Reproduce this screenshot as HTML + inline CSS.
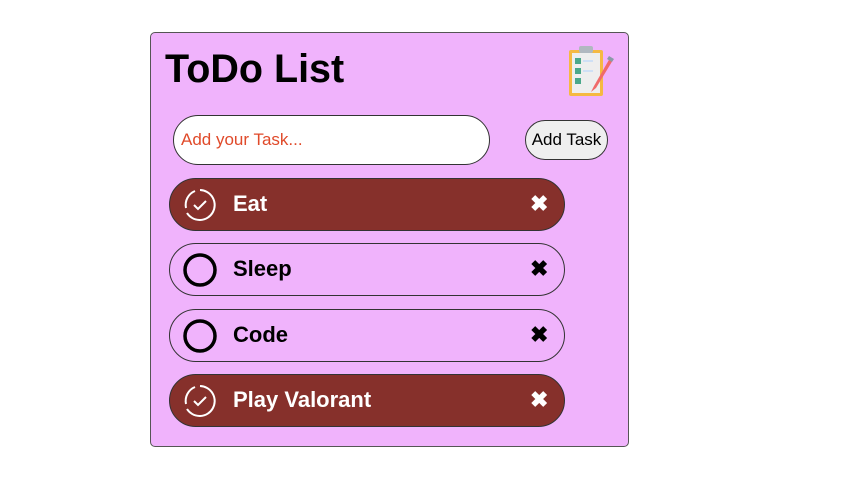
<!DOCTYPE html>
<html><head><style>
*{margin:0;padding:0;box-sizing:border-box}
body{width:843px;height:479px;background:#fff;position:relative;font-family:"Liberation Sans",Arial,sans-serif;overflow:hidden}
.card{position:absolute;left:150px;top:32px;width:479px;height:415px;background:#f0b3fc;border:1px solid #555;border-radius:5px}
h1{position:absolute;left:165px;top:47px;font-size:39.5px;font-weight:bold;color:#000}
.inp{position:absolute;left:173px;top:115px;width:317px;height:50px;background:#fff;border:1px solid #333;border-radius:25px;color:#e04a2a;font-size:17px;padding:14px 0 0 7px}
.btn{position:absolute;left:525px;top:120px;width:83px;height:40px;background:#efefef;border:1px solid #333;border-radius:20px;font-size:17px;text-align:center;line-height:37px;color:#000}
.item{position:absolute;left:169px;width:396px;height:53px;border:1px solid #333;border-radius:27px;font-size:22px;font-weight:bold}
.item.done{background:#86302b;color:#fff}
.item span{position:absolute;left:63px;top:12px}
.item .x{position:absolute;left:360px;top:12px;font-size:22px}
.item svg{position:absolute;left:13px;top:9px}
</style></head><body>
<div class="card"></div>
<h1>ToDo List</h1>
<svg style="position:absolute;left:566px;top:44px" width="50" height="54" viewBox="0 0 50 54">
<rect x="3" y="6" width="34" height="46" rx="2" fill="#f5b942"/>
<rect x="6" y="9" width="28" height="40" fill="#eeeeee"/>
<rect x="13" y="2" width="14" height="7" rx="2" fill="#b0b8c0"/>
<rect x="9" y="14" width="6" height="6" fill="#4aa88a"/><rect x="9" y="24" width="6" height="6" fill="#4aa88a"/><rect x="9" y="34" width="6" height="6" fill="#4aa88a"/>
<rect x="17" y="16" width="10" height="2" fill="#cfe0f5"/><rect x="17" y="26" width="10" height="2" fill="#cfe0f5"/>
<path d="M44 14 L28 42 L25 48 L30 44 L47 16 Z" fill="#f06a6a"/>
<path d="M43 12 L48 15 L46 18 L41 15Z" fill="#8a9aa8"/>
</svg>
<div class="inp">Add your Task...</div>
<div class="btn">Add Task</div>
<div class="item done" style="top:178px"><svg width="34" height="34" viewBox="0 0 34 34"><path d="M17 2 A15 15 0 1 1 4 25" fill="none" stroke="#fff" stroke-width="2"/><path d="M3 20 A15 15 0 0 1 12 3" fill="none" stroke="#fff" stroke-width="2"/><path d="M11 17 L15 21 L23 13" fill="none" stroke="#fff" stroke-width="2"/></svg><span>Eat</span><b class="x">✖</b></div>
<div class="item" style="top:243px"><svg width="34" height="34" viewBox="0 0 34 34"><circle cx="17" cy="17" r="15" fill="none" stroke="#000" stroke-width="3.5"/></svg><span>Sleep</span><b class="x">✖</b></div>
<div class="item" style="top:309px"><svg width="34" height="34" viewBox="0 0 34 34"><circle cx="17" cy="17" r="15" fill="none" stroke="#000" stroke-width="3.5"/></svg><span>Code</span><b class="x">✖</b></div>
<div class="item done" style="top:374px"><svg width="34" height="34" viewBox="0 0 34 34"><path d="M17 2 A15 15 0 1 1 4 25" fill="none" stroke="#fff" stroke-width="2"/><path d="M3 20 A15 15 0 0 1 12 3" fill="none" stroke="#fff" stroke-width="2"/><path d="M11 17 L15 21 L23 13" fill="none" stroke="#fff" stroke-width="2"/></svg><span>Play Valorant</span><b class="x">✖</b></div>
</body></html>
